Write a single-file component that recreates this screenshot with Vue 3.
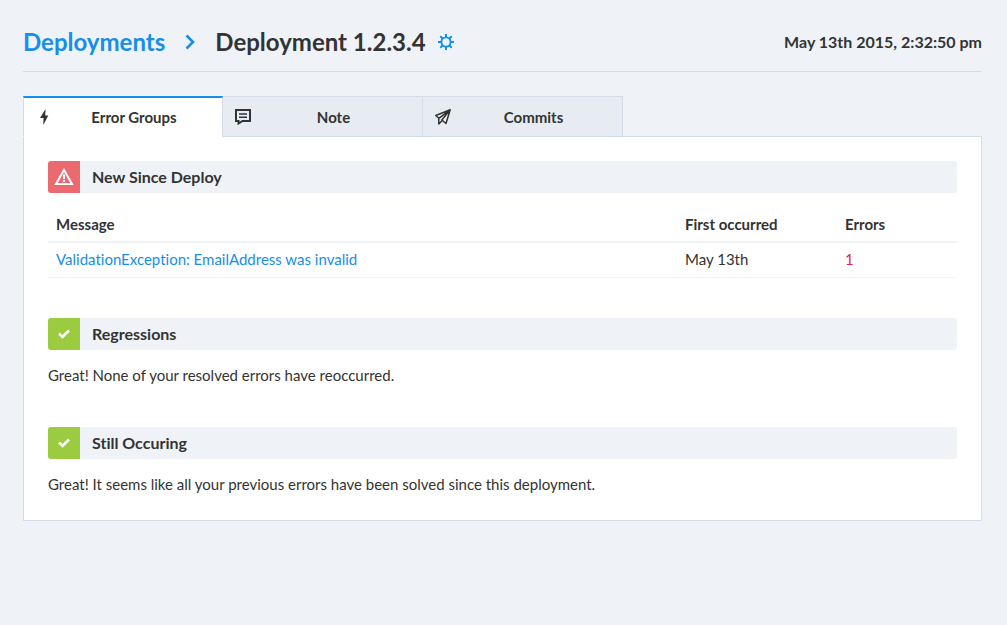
<script setup>
import { ref } from 'vue'

const active = ref('errors')
const tabs = [
  { id: 'errors', label: 'Error Groups' },
  { id: 'note', label: 'Note' },
  { id: 'commits', label: 'Commits' }
]
const errors = [
  { message: 'ValidationException: EmailAddress was invalid', first: 'May 13th', count: 1 }
]
const passed = [
  { title: 'Regressions', text: 'Great! None of your resolved errors have reoccurred.' },
  { title: 'Still Occuring', text: 'Great! It seems like all your previous errors have been solved since this deployment.' }
]
</script>

<template>
  <main class="page">
    <header class="header">
      <h1 class="crumbs">
        <a class="root" href="#">Deployments</a>
        <svg class="chevron" viewBox="0 0 10 16" width="10" height="16" aria-hidden="true">
          <path d="M1.500 1.500 8 8l-6.500 6.500" fill="none" stroke="currentColor" stroke-width="2.600" />
        </svg>
        <span class="current">Deployment 1.2.3.4</span>
        <button class="settings" type="button" aria-label="Deployment settings">
          <svg viewBox="0 0 16 16" width="16" height="16" fill="none" stroke="currentColor" aria-hidden="true">
            <circle cx="8" cy="8" r="4.600" stroke-width="1.900" />
            <path d="M8 0v3M8 13v3M0 8h3M13 8h3M2.300 2.300l2.200 2.200M11.500 11.500l2.200 2.200M2.300 13.700l2.200-2.200M11.500 4.500l2.200-2.200" stroke-width="2" />
          </svg>
        </button>
      </h1>
      <time class="date" datetime="2015-05-13T14:32:50">May 13th 2015, 2:32:50 pm</time>
    </header>

    <nav class="tabs" role="tablist">
      <button
        v-for="tab in tabs"
        :key="tab.id"
        class="tab"
        :class="{ active: active === tab.id }"
        type="button"
        role="tab"
        :aria-selected="active === tab.id"
        @click="active = tab.id"
      >
        <svg v-if="tab.id === 'errors'" class="tab-icon" viewBox="0 0 18 18" width="18" height="18" aria-hidden="true">
          <path d="M10.500 1 5 10h3.500L8.300 17l5-9.500h-3.100z" fill="currentColor" />
        </svg>
        <svg v-else-if="tab.id === 'note'" class="tab-icon" viewBox="0 0 18 18" width="18" height="18" fill="none" stroke="currentColor" stroke-width="2" aria-hidden="true">
          <path d="M2 2h14v11H8.500L4.500 15.500V13H2z" />
          <path d="M5 6h8M5 9.200h8" stroke-width="1.600" />
        </svg>
        <svg v-else class="tab-icon" viewBox="0 0 18 18" width="18" height="18" fill="none" stroke="currentColor" stroke-width="1.500" stroke-linejoin="round" aria-hidden="true">
          <path d="M16.200 1.800 1.800 7.500l3 2.800zM16.200 1.800 4.800 10.300v5.700l3-3M16.200 1.800 7.800 12l4.200 3.500z" />
        </svg>
        <span class="tab-label">{{ tab.label }}</span>
      </button>
    </nav>

    <div class="panel">
      <section class="group">
        <h2 class="bar">
          <span class="badge alert">
            <svg viewBox="0 0 20 18" width="20" height="18" aria-hidden="true">
              <path d="M10 2 18 16H2z" fill="none" stroke="currentColor" stroke-width="2" />
              <path d="M10 6.500v4.500M10 12v2" fill="none" stroke="currentColor" stroke-width="2" />
            </svg>
          </span>
          New Since Deploy
        </h2>
        <table class="table">
          <thead>
            <tr>
              <th>Message</th>
              <th class="col-first">First occurred</th>
              <th class="col-count">Errors</th>
            </tr>
          </thead>
          <tbody>
            <tr v-for="error in errors" :key="error.message">
              <td><a href="#">{{ error.message }}</a></td>
              <td>{{ error.first }}</td>
              <td class="count">{{ error.count }}</td>
            </tr>
          </tbody>
        </table>
      </section>

      <section v-for="item in passed" :key="item.title" class="group">
        <h2 class="bar">
          <span class="badge ok">
            <svg viewBox="0 0 12 10" width="12" height="10" aria-hidden="true">
              <path d="M1 4.500 4.500 8 11 1.500" fill="none" stroke="currentColor" stroke-width="2.600" />
            </svg>
          </span>
          {{ item.title }}
        </h2>
        <p class="text">{{ item.text }}</p>
      </section>
    </div>
  </main>
</template>

<style>
body {
  background: #eff3f8;
}
</style>

<style scoped>
.page {
  padding: 24px 25px 24px 23px;
  font-family: Lato, "Liberation Sans", sans-serif;
  font-size: 15px;
  font-variant-ligatures: none;
  line-height: 20px;
  color: #333;
}

a {
  color: #168eea;
  text-decoration: none;
}

.header {
  display: flex;
  align-items: center;
  justify-content: space-between;
  padding-bottom: 11px;
  border-bottom: 1px solid #d7dde5;
}

.crumbs {
  display: flex;
  align-items: center;
  margin: 0;
  font-size: 24px;
  line-height: 36px;
  font-weight: 700;
}

.chevron {
  margin: 0 20px;
  color: #168eea;
}

.settings {
  display: flex;
  margin-left: 12px;
  padding: 0;
  border: 0;
  background: none;
  color: #168eea;
  cursor: pointer;
}

.date {
  font-size: 16px;
  font-weight: 700;
}

.tabs {
  position: relative;
  display: flex;
  margin-top: 24px;
}

.tab {
  display: flex;
  align-items: center;
  width: 200px;
  height: 41px;
  padding: 0 0 0 11px;
  border: 1px solid #d4dce7;
  border-left-width: 0;
  background: #e7ecf3;
  color: #333;
  font: inherit;
  font-variant-ligatures: none;
  font-weight: 700;
  cursor: pointer;
}

.tab.active {
  border-top: 2px solid #168eea;
  border-left-width: 1px;
  border-bottom-color: #fff;
  background: #fff;
}

.tab-icon {
  flex: none;
}

.tab-label {
  flex: 1;
  padding-right: 7px;
  text-align: center;
}

.panel {
  margin-top: -1px;
  padding: 24px;
  border: 1px solid #d4dce7;
  background: #fff;
}

.group + .group {
  margin-top: 40px;
}

.bar {
  display: flex;
  align-items: center;
  gap: 12px;
  margin: 0;
  border-radius: 3px;
  background: #eff3f8;
  font-size: 16px;
  line-height: 32px;
  font-weight: 700;
}

.badge {
  display: flex;
  align-items: center;
  justify-content: center;
  width: 32px;
  height: 32px;
  border-radius: 3px 0 0 3px;
  color: #fff;
}

.alert {
  background: #eb6a70;
}

.ok {
  background: #9bcb3f;
}

.table {
  width: 100%;
  margin-top: 16px;
  border-collapse: collapse;
  table-layout: fixed;
  text-align: left;
}

th,
td {
  padding: 6px 8px 8px;
}

th {
  padding: 5px 8px 7px;
  border-bottom: 2px solid #eff3f8;
  font-weight: 700;
}

td {
  border-bottom: 1px solid #eff3f8;
}

.col-first {
  width: 144px;
}

.col-count {
  width: 104px;
}

.count {
  color: #e02650;
}

.text {
  margin: 15px 0 0;
  padding-bottom: 2px;
}
</style>
